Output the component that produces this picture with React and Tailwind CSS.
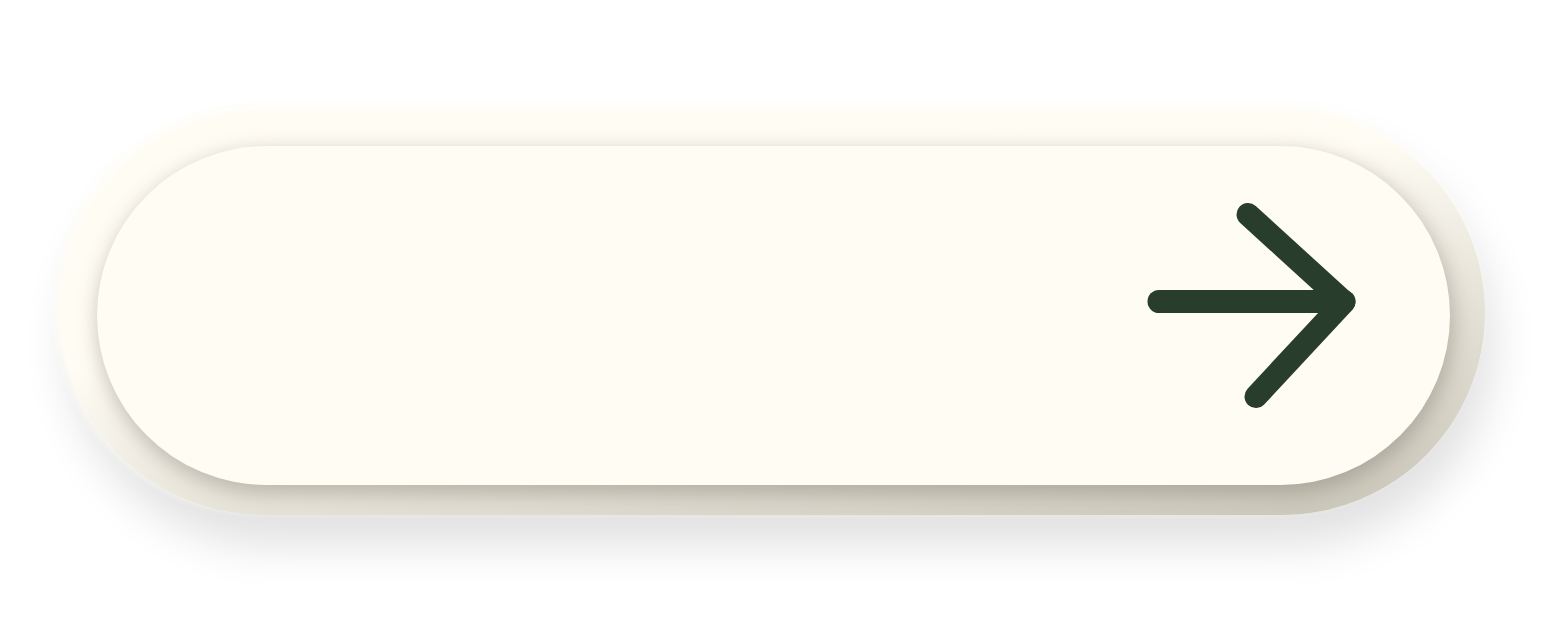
import React from 'react';

const ArrowRight = () => (
    <svg
        width="225"
        height="225"
        viewBox="1140 195 225 225"
        fill="none"
        stroke="#283d2c"
        strokeWidth="23"
        strokeLinecap="round"
        strokeLinejoin="round"
    >
        <path d="M1159 301.5H1344" />
        <path d="M1248 214.5L1344 302L1256 396.5" />
    </svg>
);

export default function App() {
    return (
        <div className="w-[1563px] h-[625px] bg-white pl-[60px] pt-[110px] overflow-hidden">
            {/* anillo exterior con degradado */}
            <div className="w-[1425px] rounded-full pl-[37px] pr-[35px] pt-[36px] pb-[30px] bg-linear-170 from-[#fffcf4] from-40% to-[#c8c4b7] to-100% shadow-[-4px_-4px_10px_0px_#fffdf6,8px_30px_46px_0px_rgba(0,0,0,0.12)]">
                <button
                    type="button"
                    className="w-[1353px] h-[339px] rounded-full bg-[#fffcf4] flex items-start pl-[1043px] pt-[49px] shadow-[2px_7px_20px_2px_rgba(105,100,85,0.36)]"
                >
                    <ArrowRight />
                </button>
            </div>
        </div>
    );
}
